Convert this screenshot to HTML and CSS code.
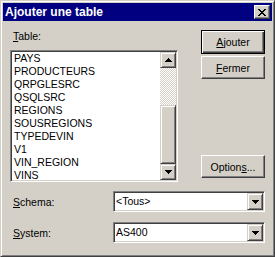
FILE: index.html
```html
<!DOCTYPE html>
<html lang="fr">
<head>
    <meta charset="UTF-8">
    <title>Ajouter une table</title>
    <link rel="stylesheet" href="styles.css">
</head>
<body>
    <div class="window">
        <div class="titlebar">
            <span class="title">Ajouter une table</span>
            <button class="close">
                <svg width="8" height="7" viewBox="0 0 8 7"><path d="M0 0h2v1H0zM6 0h2v1H6zM1 1h2v1H1zM5 1h2v1H5zM2 2h4v1H2zM3 3h2v1H3zM2 4h4v1H2zM1 5h2v1H1zM5 5h2v1H5zM0 6h2v1H0zM6 6h2v1H6z" fill="#000"/></svg>
            </button>
        </div>

        <div class="content">
            <div class="top">
                <div class="left">
                    <label class="label"><u>T</u>able:</label>
                    <div class="listbox">
                        <ul class="items">
                            <li>PAYS</li>
                            <li>PRODUCTEURS</li>
                            <li>QRPGLESRC</li>
                            <li>QSQLSRC</li>
                            <li>REGIONS</li>
                            <li>SOUSREGIONS</li>
                            <li>TYPEDEVIN</li>
                            <li>V1</li>
                            <li>VIN_REGION</li>
                            <li>VINS</li>
                        </ul>
                        <div class="scrollbar">
                            <div class="sb-btn">
                                <svg width="7" height="4" viewBox="0 0 7 4"><path d="M3 0h1v1h1v1h1v1h1v1H0V3h1V2h1V1h1z" fill="#000"/></svg>
                            </div>
                            <div class="sb-track"></div>
                            <div class="sb-thumb"></div>
                            <div class="sb-btn">
                                <svg width="7" height="4" viewBox="0 0 7 4"><path d="M0 0h7v1H6v1H5v1H4v1H3V3H2V2H1V1H0z" fill="#000"/></svg>
                            </div>
                        </div>
                    </div>
                </div>

                <div class="actions">
                    <button class="btn btn-default"><u>A</u>jouter</button>
                    <button class="btn btn-close"><u>F</u>ermer</button>
                    <button class="btn btn-options">Option<u>s</u>...</button>
                </div>
            </div>

            <div class="field">
                <label class="field-label"><u>S</u>chema:</label>
                <div class="combo">
                    <span class="combo-value">&lt;Tous&gt;</span>
                    <span class="sb-btn combo-drop">
                        <svg width="7" height="4" viewBox="0 0 7 4"><path d="M0 0h7v1H6v1H5v1H4v1H3V3H2V2H1V1H0z" fill="#000"/></svg>
                    </span>
                </div>
            </div>

            <div class="field field-system">
                <label class="field-label"><u>S</u>ystem:</label>
                <div class="combo">
                    <span class="combo-value">AS400</span>
                    <span class="sb-btn combo-drop">
                        <svg width="7" height="4" viewBox="0 0 7 4"><path d="M0 0h7v1H6v1H5v1H4v1H3V3H2V2H1V1H0z" fill="#000"/></svg>
                    </span>
                </div>
            </div>
        </div>
    </div>
</body>
</html>
```

FILE: styles.css
```css
body {
    margin: 0;
    background: #d4d0c8;
    font-family: "Liberation Sans", Arial, sans-serif;
    font-size: 10.5px;
    color: #000;
}

.window {
    width: 275px;
    height: 257px;
    box-sizing: border-box;
    border: 1px solid;
    border-color: #d4d0c8 #404040 #404040 #d4d0c8;
    box-shadow: inset 1px 1px #fff, inset -1px -1px #808080;
    padding: 2px;
    background: #d4d0c8;
}

.titlebar {
    height: 18px;
    background: #000080;
    display: flex;
    align-items: center;
    padding-left: 2px;
}

.title {
    color: #fff;
    font-weight: bold;
    font-size: 12px;
}

.close {
    margin-left: auto;
    margin-right: 2px;
    width: 16px;
    height: 14px;
    padding: 0;
    display: flex;
    align-items: center;
    justify-content: center;
    background: #d4d0c8;
    border: 1px solid;
    border-color: #fff #404040 #404040 #fff;
    box-shadow: inset -1px -1px #808080;
}

.content {
    padding: 9px 7px 0;
}

.top {
    display: flex;
    justify-content: space-between;
}

.left {
    width: 168px;
}

.label {
    display: block;
    line-height: 13px;
    padding-left: 3px;
    margin-bottom: 7px;
}

.listbox {
    display: flex;
    height: 132px;
    box-sizing: border-box;
    border: 1px solid;
    border-color: #808080 #fff #fff #808080;
    box-shadow: inset 1px 1px #404040, inset -1px -1px #d4d0c8;
    padding: 1px;
    background: #fff;
}

.items {
    flex: 1;
    list-style: none;
    margin: 0;
    padding: 0 0 0 2px;
    line-height: 13px;
    overflow: hidden;
}

.scrollbar {
    width: 16px;
    display: flex;
    flex-direction: column;
}

.sb-btn {
    height: 16px;
    flex: none;
    box-sizing: border-box;
    display: flex;
    align-items: center;
    justify-content: center;
    background: #d4d0c8;
    border: 1px solid;
    border-color: #d4d0c8 #404040 #404040 #d4d0c8;
    box-shadow: inset 1px 1px #fff, inset -1px -1px #808080;
}

.sb-track {
    height: 37px;
    background: repeating-conic-gradient(#d4d0c8 0 25%, #fff 0 50%) 0 0 / 2px 2px;
}

.sb-thumb {
    flex: 1;
    box-sizing: border-box;
    background: #d4d0c8;
    border: 1px solid;
    border-color: #d4d0c8 #404040 #404040 #d4d0c8;
    box-shadow: inset 1px 1px #fff, inset -1px -1px #808080;
}

.actions {
    width: 64px;
    display: flex;
    flex-direction: column;
    padding-bottom: 4px;
}

.btn {
    width: 64px;
    height: 23px;
    padding: 0;
    font: inherit;
    color: #000;
    background: #d4d0c8;
    border: 1px solid;
    border-color: #fff #404040 #404040 #fff;
    box-shadow: inset -1px -1px #808080;
}

.btn-default {
    height: 24px;
    border-color: #000;
    box-shadow: inset 1px 1px #fff, inset -1px -1px #404040, inset -2px -2px #808080;
}

.btn-close {
    margin-top: 2px;
}

.btn-options {
    margin-top: auto;
}

.field {
    display: flex;
    align-items: center;
    margin-top: 9px;
}

.field-system {
    margin-top: 10px;
}

.field-label {
    flex: 1;
    padding-left: 3px;
}

.combo {
    width: 152px;
    height: 21px;
    box-sizing: border-box;
    display: flex;
    border: 1px solid;
    border-color: #808080 #fff #fff #808080;
    box-shadow: inset 1px 1px #404040, inset -1px -1px #d4d0c8;
    padding: 1px;
    background: #fff;
}

.combo-value {
    flex: 1;
    padding-left: 1px;
    line-height: 17px;
}

.combo-drop {
    width: 16px;
    height: 17px;
}
```
